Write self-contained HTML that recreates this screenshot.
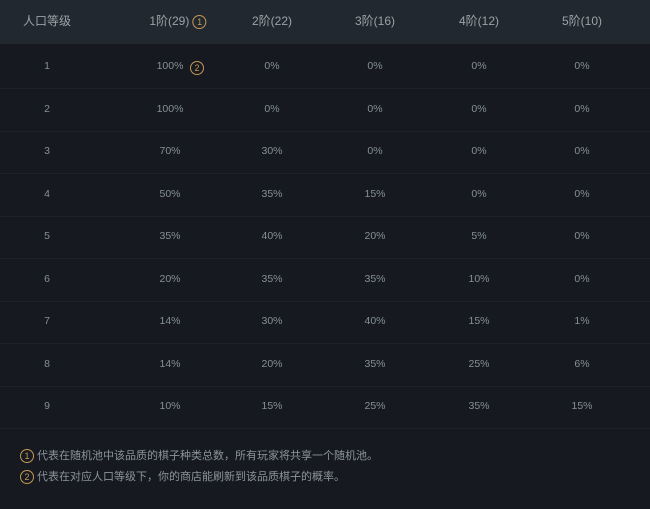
<!DOCTYPE html>
<html><head><meta charset="utf-8"><style>
body{margin:0;width:650px;height:509px;background:#161920;font-family:"Liberation Sans","Noto Sans CJK SC",sans-serif;overflow:hidden}
.hdr{position:absolute;left:0;top:0;width:650px;height:44px;background:#212830}
.c{position:absolute;transform:translateX(-50%);white-space:nowrap;color:#859095;font-size:10.5px}
.h{color:#9aa3a8;font-size:12px}
.row{position:absolute;left:0;width:650px;height:1px;background:#1d2128}
.ci{display:inline-block;width:12px;height:12px;border:1.4px solid #c49a55;border-radius:50%;color:#c49a55;font-size:9px;line-height:12px;text-align:center;vertical-align:middle;box-sizing:content-box}
.note{position:absolute;left:20px;color:#8b949a;font-size:11px}
</style></head><body>
<div class="hdr"></div>
<div id="t"></div>
<div class="note" style="top:447px"><span class="ci">1</span> 代表在随机池中该品质的棋子种类总数，所有玩家将共享一个随机池。</div>
<div class="note" style="top:468px"><span class="ci">2</span> 代表在对应人口等级下，你的商店能刷新到该品质棋子的概率。</div>
<div style="position:absolute;left:190px;top:59px"><span class="ci">2</span></div>
<script>
var xs=[47,170,272,375,479,582];
var hd=["人口等级","1阶(29)","2阶(22)","3阶(16)","4阶(12)","5阶(10)"];
var d=[["100%","0%","0%","0%","0%"],["100%","0%","0%","0%","0%"],["70%","30%","0%","0%","0%"],["50%","35%","15%","0%","0%"],["35%","40%","20%","5%","0%"],["20%","35%","35%","10%","0%"],["14%","30%","40%","15%","1%"],["14%","20%","35%","25%","6%"],["10%","15%","25%","35%","15%"]];
var h="";
for(var i=0;i<6;i++){h+='<div class="c h" style="left:'+(i==1?xs[i]+8:xs[i])+'px;top:12px">'+hd[i]+(i==1?' <span class="ci">1</span>':'')+'</div>';}
for(var r=0;r<9;r++){var y=67+r*42.5;
h+='<div class="row" style="top:'+(y+21)+'px"></div>';
h+='<div class="c" style="left:47px;top:'+(y-7)+'px">'+(r+1)+'</div>';
for(var j=0;j<5;j++){h+='<div class="c" style="left:'+xs[j+1]+'px;top:'+(y-7)+'px">'+d[r][j]+'</div>';}}
document.getElementById("t").innerHTML=h;
</script>
</body></html>
